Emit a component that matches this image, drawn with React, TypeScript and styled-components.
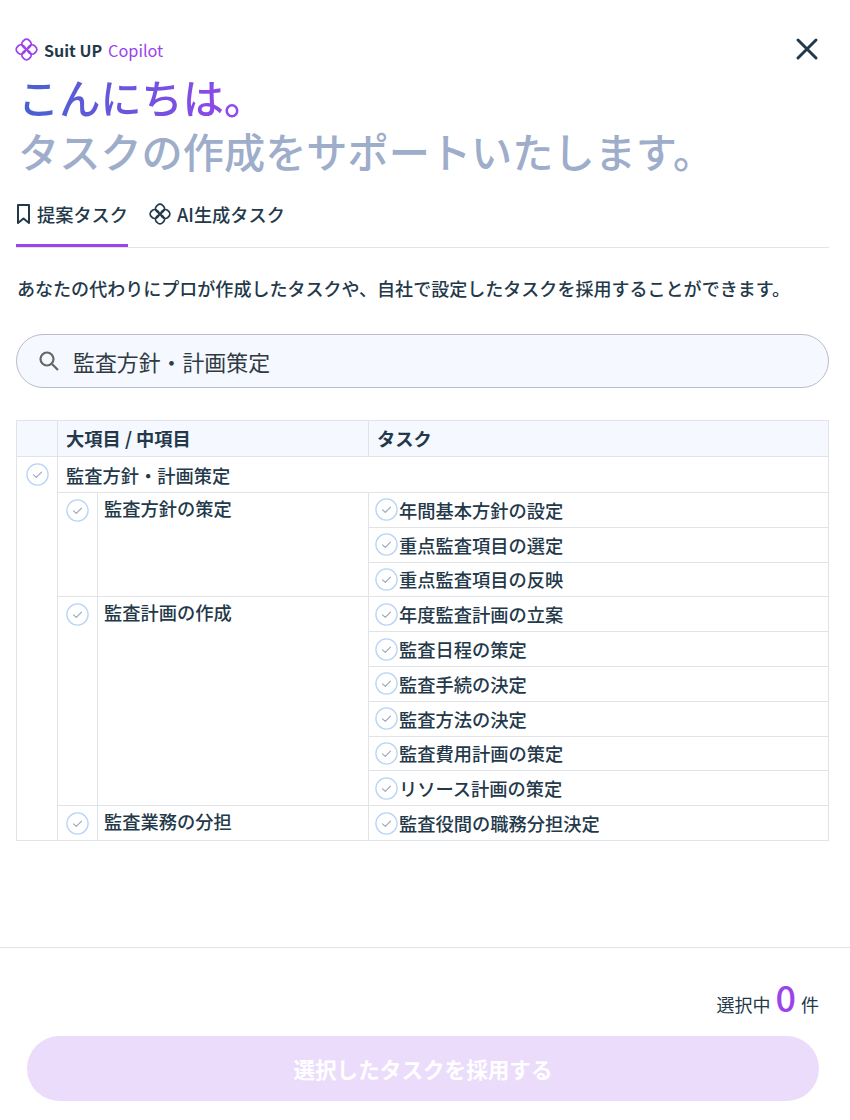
import { createGlobalStyle } from "styled-components";
import styled from "styled-components";

const colors = {
  text: "#23394a",
  purple: "#9b44ee",
  line: "#e0e3e8",
  tint: "#f5f8ff",
};

const GlobalStyle = createGlobalStyle`
  html, body {
    margin: 0;
    background: #fff;
  }
  body {
    font-family: "Noto Sans CJK JP", "Noto Sans", sans-serif;
    color: ${colors.text};
  }
`;

const Page = styled.div`
  width: 850px;
  height: 1120px;
  display: flex;
  flex-direction: column;
  overflow: hidden;
`;

const Main = styled.main`
  height: 947px;
  box-sizing: border-box;
  padding: 36px 21px 0 16px;
`;

const TopBar = styled.div`
  display: flex;
  align-items: center;
  justify-content: space-between;
  height: 28px;
`;

const Brand = styled.div`
  display: flex;
  align-items: center;
  gap: 6px;
  font-size: 16px;
  font-weight: 700;
`;

const LogoSlot = styled.span`
  display: flex;
  margin: -2px 0 0 -1px;
`;

const BrandSub = styled.span`
  color: ${colors.purple};
  font-size: 16.3px;
  font-weight: 400;
`;

const CloseButton = styled.button`
  display: flex;
  border: 0;
  padding: 0;
  margin: -2px 9px 0 0;
  background: none;
  color: ${colors.text};
`;

const Heading = styled.h1`
  margin: 5px 0 0;
  padding-left: 2px;
  font-size: 41.2px;
  line-height: 54px;
  font-weight: 500;
  color: #9dadca;
`;

const Greeting = styled.span`
  display: block;
  width: fit-content;
  background: linear-gradient(90deg, #4563cf, #9b44ee);
  -webkit-background-clip: text;
  background-clip: text;
  color: transparent;
`;

const Tabs = styled.nav`
  display: flex;
  margin-top: 9px;
  gap: 21px;
  height: 62px;
  box-sizing: border-box;
  border-bottom: 1px solid ${colors.line};
`;

const Tab = styled.div<{ $active?: boolean }>`
  display: flex;
  align-items: center;
  gap: 6px;
  height: 61px;
  box-sizing: border-box;
  padding-bottom: 3px;
  font-size: 18.2px;
  font-weight: 500;
  border-bottom: 3px solid ${({ $active }) => ($active ? colors.purple : "transparent")};
`;

const Lead = styled.p`
  margin: 26px 0 0 1px;
  font-size: 18.05px;
  line-height: 28px;
  font-weight: 500;
`;

const Search = styled.div`
  display: flex;
  align-items: center;
  gap: 12px;
  height: 54px;
  box-sizing: border-box;
  margin-top: 32px;
  padding-left: 20px;
  border: 1px solid #b9bccb;
  border-radius: 27px;
  background: ${colors.tint};
  font-size: 21.9px;
  color: #2f3a42;
`;

const Table = styled.table`
  width: 812px;
  margin-top: 32px;
  border-collapse: collapse;
  table-layout: fixed;
  font-size: 18.25px;
  font-weight: 500;
  line-height: 26px;
`;

const HeadCell = styled.th`
  height: 36px;
  padding: 0 8px 2px;
  box-sizing: border-box;
  border: 1px solid ${colors.line};
  background: ${colors.tint};
  text-align: left;
  font-weight: 700;
`;

const Cell = styled.td<{ $pad?: string }>`
  padding: ${({ $pad }) => $pad ?? "0 6px"};
  box-sizing: border-box;
  border: 1px solid ${colors.line};
  vertical-align: top;
`;

const CheckCell = styled(Cell)`
  padding: 6px 0 0;
  text-align: center;
`;

const TaskRow = styled.div`
  display: flex;
  align-items: center;
  gap: 1px;
  height: 33.8px;
`;

const Footer = styled.footer`
  flex: 1;
  display: flex;
  flex-direction: column;
  border-top: 1px solid ${colors.line};
  padding: 22px 31px 0 27px;
`;

const Count = styled.div`
  align-self: flex-end;
  display: flex;
  align-items: baseline;
  gap: 5px;
  height: 66px;
  font-size: 18px;
`;

const CountValue = styled.span`
  font-size: 36px;
  font-weight: 500;
  color: ${colors.purple};
`;

const Submit = styled.button`
  height: 65px;
  border: 0;
  border-radius: 33px;
  background: #ebdcfc;
  color: #fff;
  font: 700 21.6px "Noto Sans CJK JP", sans-serif;
`;

const CheckSvg = styled.svg`
  display: inline-block;
  vertical-align: top;
  flex: none;
`;

function Check() {
  return (
    <CheckSvg width="23" height="23" viewBox="0 0 23 23" fill="none">
      <circle cx="11.5" cy="11.5" r="10.6" stroke="#b8d4f6" strokeWidth="1.3" />
      <path d="M7.5 11.8l2.8 2.6 5.2-5.3" stroke="#93a6c0" strokeWidth="1.1" strokeLinecap="round" strokeLinejoin="round" />
    </CheckSvg>
  );
}

const logoLobes = [
  [12, 6.2],
  [17.8, 12],
  [12, 17.8],
  [6.2, 12],
];

function LinkLogo({ size, color }: { size: number; color: string }) {
  return (
    <svg width={size} height={size} viewBox="0 0 24 24" fill="none" stroke={color} strokeWidth="1.9">
      {logoLobes.map(([x, y]) => (
        <rect key={`${x}-${y}`} x={x - 4.6} y={y - 4.6} width="9.2" height="9.2" rx="3.9" transform={`rotate(45 ${x} ${y})`} />
      ))}
    </svg>
  );
}

const groups = [
  { name: "監査方針の策定", tasks: ["年間基本方針の設定", "重点監査項目の選定", "重点監査項目の反映"] },
  {
    name: "監査計画の作成",
    tasks: ["年度監査計画の立案", "監査日程の策定", "監査手続の決定", "監査方法の決定", "監査費用計画の策定", "リソース計画の策定"],
  },
  { name: "監査業務の分担", tasks: ["監査役間の職務分担決定"] },
];

const rowTotal = groups.reduce((sum, g) => sum + g.tasks.length, 0);

export default function App() {
  return (
    <Page>
      <GlobalStyle />
      <Main>
        <TopBar>
          <Brand>
            <LogoSlot>
              <LinkLogo size={23} color={colors.purple} />
            </LogoSlot>
            <span>Suit UP</span>
            <BrandSub>Copilot</BrandSub>
          </Brand>
          <CloseButton aria-label="閉じる">
            <svg width="26" height="26" viewBox="0 0 26 26" fill="none" stroke="currentColor" strokeWidth="3" strokeLinecap="round">
              <path d="M4 4l18 18M22 4L4 22" />
            </svg>
          </CloseButton>
        </TopBar>
        <Heading>
          <Greeting>こんにちは。</Greeting>
          タスクの作成をサポートいたします。
        </Heading>
        <Tabs>
          <Tab $active>
            <svg width="15" height="22" viewBox="0 0 15 22" fill="none" stroke="currentColor" strokeWidth="2" strokeLinejoin="round">
              <path d="M2 2h11v18l-5.5-4.5L2 20z" />
            </svg>
            提案タスク
          </Tab>
          <Tab>
            <LinkLogo size={22} color={colors.text} />
            AI生成タスク
          </Tab>
        </Tabs>
        <Lead>あなたの代わりにプロが作成したタスクや、自社で設定したタスクを採用することができます。</Lead>
        <Search>
          <svg width="24" height="24" viewBox="0 0 24 24" fill="none" stroke="#666" strokeWidth="2.2">
            <circle cx="10" cy="10" r="6.5" />
            <path d="M15 15l6 6" />
          </svg>
          監査方針・計画策定
        </Search>
        <Table>
          <colgroup>
            <col width="41" />
            <col width="40" />
            <col width="271" />
            <col width="460" />
          </colgroup>
          <thead>
            <tr>
              <HeadCell />
              <HeadCell colSpan={2}>大項目 / 中項目</HeadCell>
              <HeadCell>タスク</HeadCell>
            </tr>
          </thead>
          <tbody>
            <tr>
              <CheckCell rowSpan={rowTotal + 1}>
                <Check />
              </CheckCell>
              <Cell colSpan={3} $pad="5px 8px 4px">
                監査方針・計画策定
              </Cell>
            </tr>
            {groups.flatMap((group) =>
              group.tasks.map((task, i) => (
                <tr key={task}>
                  {i === 0 ? (
                    <>
                      <CheckCell rowSpan={group.tasks.length}>
                        <Check />
                      </CheckCell>
                      <Cell rowSpan={group.tasks.length} $pad="2px 6px 0">
                        {group.name}
                      </Cell>
                    </>
                  ) : null}
                  <Cell>
                    <TaskRow>
                      <Check />
                      {task}
                    </TaskRow>
                  </Cell>
                </tr>
              )),
            )}
          </tbody>
        </Table>
      </Main>
      <Footer>
        <Count>
          選択中<CountValue>0</CountValue>件
        </Count>
        <Submit disabled>選択したタスクを採用する</Submit>
      </Footer>
    </Page>
  );
}
